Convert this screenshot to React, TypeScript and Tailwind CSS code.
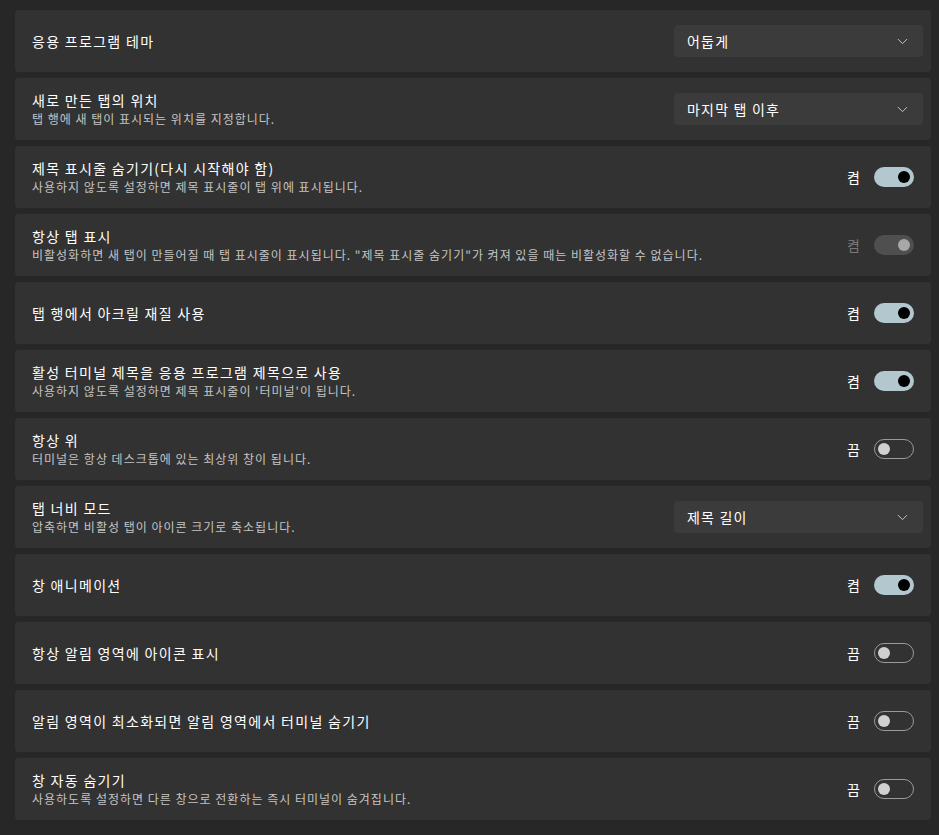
import { ChevronDown } from "lucide-react";

type Row =
  | { title: string; desc?: string; kind: "select"; value: string }
  | { title: string; desc?: string; kind: "toggle"; on: boolean; disabled?: boolean };

const rows: Row[] = [
  { title: "응용 프로그램 테마", kind: "select", value: "어둡게" },
  { title: "새로 만든 탭의 위치", desc: "탭 행에 새 탭이 표시되는 위치를 지정합니다.", kind: "select", value: "마지막 탭 이후" },
  { title: "제목 표시줄 숨기기(다시 시작해야 함)", desc: "사용하지 않도록 설정하면 제목 표시줄이 탭 위에 표시됩니다.", kind: "toggle", on: true },
  {
    title: "항상 탭 표시",
    desc: "비활성화하면 새 탭이 만들어질 때 탭 표시줄이 표시됩니다. \"제목 표시줄 숨기기\"가 켜져 있을 때는 비활성화할 수 없습니다.",
    kind: "toggle",
    on: true,
    disabled: true,
  },
  { title: "탭 행에서 아크릴 재질 사용", kind: "toggle", on: true },
  { title: "활성 터미널 제목을 응용 프로그램 제목으로 사용", desc: "사용하지 않도록 설정하면 제목 표시줄이 '터미널'이 됩니다.", kind: "toggle", on: true },
  { title: "항상 위", desc: "터미널은 항상 데스크톱에 있는 최상위 창이 됩니다.", kind: "toggle", on: false },
  { title: "탭 너비 모드", desc: "압축하면 비활성 탭이 아이콘 크기로 축소됩니다.", kind: "select", value: "제목 길이" },
  { title: "창 애니메이션", kind: "toggle", on: true },
  { title: "항상 알림 영역에 아이콘 표시", kind: "toggle", on: false },
  { title: "알림 영역이 최소화되면 알림 영역에서 터미널 숨기기", kind: "toggle", on: false },
  { title: "창 자동 숨기기", desc: "사용하도록 설정하면 다른 창으로 전환하는 즉시 터미널이 숨겨집니다.", kind: "toggle", on: false },
];

function Toggle({ on, disabled }: { on: boolean; disabled?: boolean }) {
  if (disabled) {
    return (
      <div className="flex items-center gap-[14px] pr-[9px]">
        <span className="text-[14px] text-[#787878]">켬</span>
        <div className="flex h-[20px] w-[40px] items-center justify-end rounded-full bg-[#4f4f4f] pr-[4px]">
          <div className="h-[12px] w-[12px] rounded-full bg-[#a8a8a8]" />
        </div>
      </div>
    );
  }
  return (
    <div className="flex items-center gap-[14px] pr-[9px]">
      <span className="text-[14px] text-white">{on ? "켬" : "끔"}</span>
      {on ? (
        <div className="flex h-[20px] w-[40px] items-center justify-end rounded-full bg-[#b3c8ce] pr-[4px]">
          <div className="h-[12px] w-[12px] rounded-full bg-black" />
        </div>
      ) : (
        <div className="flex h-[20px] w-[40px] items-center rounded-full border border-[#9a9a9a] pl-[3px]">
          <div className="h-[12px] w-[12px] rounded-full bg-[#d0d0d0]" />
        </div>
      )}
    </div>
  );
}

function Select({ value }: { value: string }) {
  return (
    <div className="flex h-[32px] w-[249px] items-center justify-between rounded-[4px] bg-[#3b3b3b] pl-[13px] pr-[12px]">
      <span className="text-[14px] tracking-[1.2px] text-white">{value}</span>
      <ChevronDown className="h-[17px] w-[17px] text-[#cfcfcf]" strokeWidth={1.3} />
    </div>
  );
}

export default function App() {
  return (
    <div
      className="min-h-[835px] bg-[#272727] pl-[15px] pr-[8px] pt-[10px]"
      style={{ fontFamily: "'Segoe UI', 'Noto Sans CJK KR', 'Noto Sans', sans-serif" }}
    >
      <div className="flex flex-col gap-[6px]">
        {rows.map((r) => (
          <div
            key={r.title}
            className="flex h-[62px] items-center justify-between rounded-[4px] bg-[#323232] pl-[17px] pr-[8px]"
          >
            <div className="flex flex-col">
              <span className="text-[14px] leading-[19px] tracking-[1.3px] text-white">{r.title}</span>
              {r.desc && (
                <span className="text-[12px] leading-[17px] tracking-[1px] text-[#c4c4c4]">{r.desc}</span>
              )}
            </div>
            {r.kind === "select" ? <Select value={r.value} /> : <Toggle on={r.on} disabled={r.disabled} />}
          </div>
        ))}
      </div>
    </div>
  );
}
